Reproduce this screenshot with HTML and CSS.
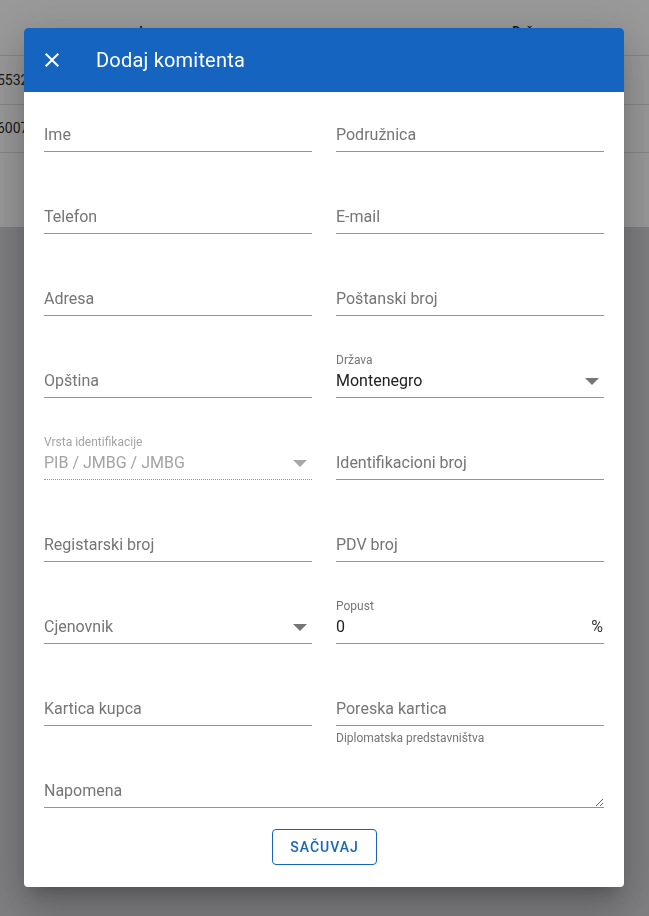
FILE: index.html
```html
<!DOCTYPE html>
<html lang="sr">
<head>
<meta charset="utf-8">
<title>Dodaj komitenta</title>
<link rel="stylesheet" href="styles.css">
</head>
<body>
<div class="page">
  <div class="table">
    <div class="trow thead"><span class="cell c1"></span><span class="cell c2">Ime</span><span class="cell c3">Država</span></div>
    <div class="trow"><span class="cell c1 num">55320011</span></div>
    <div class="trow"><span class="cell c1 num">60071234</span></div>
    <div class="tfoot"></div>
  </div>
</div>

<div class="backdrop">
  <div class="dialog">
    <header class="dlg-head">
      <svg class="close" width="24" height="24" viewBox="0 0 24 24"><path fill="#fff" d="M19 6.41L17.59 5 12 10.59 6.41 5 5 6.41 10.59 12 5 17.59 6.41 19 12 13.41 17.59 19 19 17.59 13.41 12z"/></svg>
      <h2 class="dlg-title">Dodaj komitenta</h2>
    </header>
    <div class="dlg-body">
      <div class="grid">
        <div class="field"><div class="lbl"></div><div class="inp"><span class="ph">Ime</span></div></div>
        <div class="field"><div class="lbl"></div><div class="inp"><span class="ph">Podružnica</span></div></div>

        <div class="field"><div class="lbl"></div><div class="inp"><span class="ph">Telefon</span></div></div>
        <div class="field"><div class="lbl"></div><div class="inp"><span class="ph">E-mail</span></div></div>

        <div class="field"><div class="lbl"></div><div class="inp"><span class="ph">Adresa</span></div></div>
        <div class="field"><div class="lbl"></div><div class="inp"><span class="ph">Poštanski broj</span></div></div>

        <div class="field"><div class="lbl"></div><div class="inp"><span class="ph">Opština</span></div></div>
        <div class="field"><div class="lbl">Država</div><div class="inp"><span class="val">Montenegro</span><svg class="arrow" width="14" height="7" viewBox="0 0 14 7"><path d="M0 0h14L7 7z" fill="#757575"/></svg></div></div>

        <div class="field disabled"><div class="lbl">Vrsta identifikacije</div><div class="inp"><span class="val">PIB / JMBG / JMBG</span><svg class="arrow" width="14" height="7" viewBox="0 0 14 7"><path d="M0 0h14L7 7z" fill="#a8a8a8"/></svg></div></div>
        <div class="field"><div class="lbl"></div><div class="inp"><span class="ph">Identifikacioni broj</span></div></div>

        <div class="field"><div class="lbl"></div><div class="inp"><span class="ph">Registarski broj</span></div></div>
        <div class="field"><div class="lbl"></div><div class="inp"><span class="ph">PDV broj</span></div></div>

        <div class="field"><div class="lbl"></div><div class="inp"><span class="ph">Cjenovnik</span><svg class="arrow" width="14" height="7" viewBox="0 0 14 7"><path d="M0 0h14L7 7z" fill="#757575"/></svg></div></div>
        <div class="field"><div class="lbl">Popust</div><div class="inp"><span class="val">0</span><span class="adorn">%</span></div></div>

        <div class="field"><div class="lbl"></div><div class="inp"><span class="ph">Kartica kupca</span></div></div>
        <div class="field"><div class="lbl"></div><div class="inp"><span class="ph">Poreska kartica</span></div><div class="helper">Diplomatska predstavništva</div></div>
      </div>
      <div class="field full"><div class="lbl"></div><div class="inp area"><textarea class="note" rows="1" placeholder="Napomena"></textarea></div></div>
      <div class="actions"><button class="save" type="button">SAČUVAJ</button></div>
    </div>
  </div>
</div>
</body>
</html>
```

FILE: styles.css
```css
* { box-sizing: border-box; }
html, body { margin: 0; padding: 0; }
body {
  width: 649px;
  height: 916px;
  overflow: hidden;
  font-family: Roboto, "Liberation Sans", Arial, sans-serif;
  background: #d4d4d9;
}
.page { width: 649px; height: 916px; }
.table { background: #fff; overflow: hidden; }
.trow {
  height: 48.5px;
  display: flex;
  align-items: center;
  border-bottom: 1px solid #e0e0e0;
  font-size: 14px;
  color: rgba(0,0,0,0.87);
  white-space: nowrap;
}
.thead { height: 56px; font-weight: 500; padding-top: 9px; }
.cell { display: block; }
.c1 { width: 100px; text-indent: -3px; }
.c2 { width: 412px; padding-left: 39px; }
.c3 { width: 137px; }
.tfoot { height: 74px; }

.backdrop {
  position: fixed;
  inset: 0;
  background: rgba(0,0,0,0.4);
  display: flex;
  align-items: flex-start;
  justify-content: flex-start;
  padding: 28px 24px;
}
.dialog {
  width: 600px;
  height: 859px;
  background: #fff;
  border-radius: 4px;
  overflow: hidden;
  box-shadow: 0 11px 15px -7px rgba(0,0,0,0.2), 0 24px 38px 3px rgba(0,0,0,0.14), 0 9px 46px 8px rgba(0,0,0,0.12);
  display: flex;
  flex-direction: column;
}
.dlg-head {
  height: 64px;
  flex: none;
  background: #1565c0;
  display: flex;
  align-items: center;
  padding-left: 16px;
  gap: 32px;
}
.close { display: block; flex: none; }
.dlg-title {
  margin: 0;
  font-size: 20px;
  font-weight: 400;
  letter-spacing: 0.2px;
  color: #fff;
  line-height: normal;
}
.dlg-body {
  padding: 11px 20px 0;
  display: flex;
  flex-direction: column;
}
.grid {
  display: grid;
  grid-template-columns: 268px 268px;
  column-gap: 24px;
  grid-auto-rows: 49px;
  row-gap: 33px;
}
.field { position: relative; height: 49px; }
.field.full { margin-top: 33px; }
.lbl {
  height: 16px;
  padding-top: 5px;
  font-size: 12px;
  line-height: 12px;
  color: #757575;
  white-space: nowrap;
}
.inp {
  height: 33px;
  border-bottom: 1px solid #949494;
  display: flex;
  align-items: center;
  padding: 0 0 1px;
  font-size: 16px;
  line-height: 19px;
}
.ph { color: #757575; flex: 1; }
.val { color: #212121; flex: 1; }
.arrow { display: block; flex: none; margin-right: 5px; margin-top: 2px; }
.adorn { color: #333; margin-right: 1px; }
.disabled .lbl { color: #a3a3a3; }
.disabled .val { color: #a3a3a3; }
.disabled .inp { border-bottom: 1px dotted #949494; }
.helper {
  margin-top: 3px;
  font-size: 12px;
  line-height: 19.92px;
  color: #757575;
  white-space: nowrap;
}
.inp.area { padding: 0; align-items: stretch; }
.note {
  display: block;
  width: 100%;
  height: 32px;
  margin: 0;
  border: 0;
  outline: none;
  padding: 6px 0 7px;
  font: inherit;
  font-size: 16px;
  line-height: 19px;
  color: #212121;
  background: transparent;
  resize: vertical;
}
.note::placeholder { color: #757575; opacity: 1; }
.actions {
  display: flex;
  justify-content: center;
  margin-top: 21px;
}
.save {
  height: 36px;
  width: 105px;
  padding: 0;
  border: 1px solid #1565c0;
  border-radius: 4px;
  background: #fff;
  color: #1565c0;
  font-family: Roboto, "Liberation Sans", Arial, sans-serif;
  font-size: 14px;
  font-weight: 500;
  letter-spacing: 1px;
  text-indent: 1px;
  display: flex;
  align-items: center;
  justify-content: center;
}
```
